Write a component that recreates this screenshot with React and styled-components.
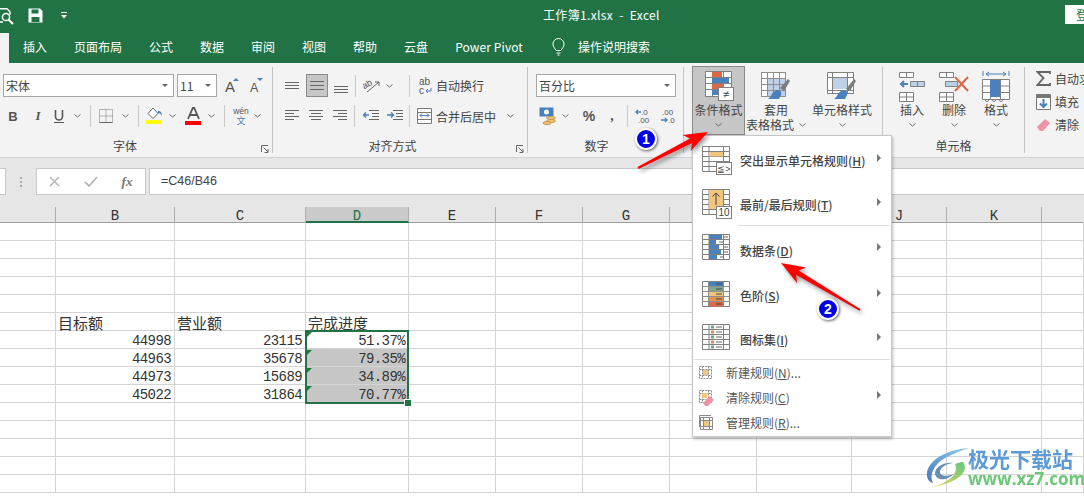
import React from "react";
import styled, { createGlobalStyle } from "styled-components";

const GREEN = "#217346";
const CJK = '"Noto Sans CJK SC", "Noto Sans", sans-serif';
const MONO = '"Liberation Mono", "Noto Sans CJK SC", monospace';
const BLUE = "#4a80bd";
const ORANGE = "#dc6844";
const GOLD = "#f1c67c";

const Global = createGlobalStyle`
  html, body { margin: 0; padding: 0; background: #fff; overflow: hidden; }
  * { box-sizing: border-box; }
`;

const Page = styled.div`
  position: relative; width: 1084px; height: 497px; overflow: hidden;
  font-family: ${CJK}; font-size: 12px; color: #444; background: #fff;
  display: flex; flex-direction: column;
`;

/* ---- title bar ---- */
const TitleBar = styled.header`
  height: 33px; background: ${GREEN}; color: #fff; display: flex; align-items: flex-start;
`;
const Quick = styled.div`
  width: 543px; height: 33px; display: flex; align-items: flex-start; padding-top: 8px;
`;
const Title = styled.div`
  font-size: 12px; line-height: 16px; margin-top: 7px; letter-spacing: 0.35px; white-space: pre;
`;
const Login = styled.div`
  margin-left: auto; margin-top: 5px; width: 19px; height: 19px; background: #fff; color: ${GREEN};
  font-size: 12px; line-height: 19px; padding-left: 11px; overflow: hidden; white-space: nowrap;
`;

/* ---- tabs ---- */
const TabBar = styled.nav`
  height: 30px; background: ${GREEN}; display: flex; align-items: center; gap: 27px; padding-right: 10px;
`;
const ActiveTab = styled.div`
  width: 9px; height: 30px; background: #f3f3f3; margin-right: -13px;
`;
const Tab = styled.div`
  color: #fff; font-size: 12px; line-height: 16px; white-space: nowrap; padding-bottom: 2px;
  letter-spacing: ${p => (p.$latin ? "0.1px" : "0")};
`;
const Bulb = styled.svg`
  margin: -2px -14px 0 2px; flex: none;
`;

/* ---- ribbon ---- */
const Ribbon = styled.section`
  height: 95px; background: #f3f3f3; border-bottom: 1px solid #d2d2d2; display: flex; padding: 4px 0 4px;
`;
const Group = styled.div`
  position: relative; width: ${p => p.$w}px; flex: none; display: flex; flex-direction: column;
  border-right: ${p => (p.$last ? "none" : "1px solid #c4c4c4")};
`;
const GroupRow = styled.div`
  display: flex; align-items: center; height: ${p => p.$h}px; margin-top: ${p => p.$mt || 0}px;
`;
const GroupLabel = styled.div`
  margin-top: auto; height: 14px; line-height: 14px; text-align: center; font-size: 12px; color: #444;
  padding-right: ${p => p.$pr || 0}px;
`;
const Launcher = styled.svg`
  position: absolute; right: 3px; bottom: 0;
`;
const Select = styled.div`
  width: ${p => p.$w}px; height: 23px; margin-left: ${p => p.$ml || 0}px; background: #fff;
  border: 1px solid #a6a6a6; display: flex; align-items: center; justify-content: space-between;
  padding: 0 5px 0 2px; font-size: 12px; color: #444; flex: none;
`;
const Caret = styled.i`
  width: 0; height: 0; border-left: 3.5px solid transparent; border-right: 3.5px solid transparent;
  border-top: 3.5px solid #666;
`;
const ToggleOn = styled.div`
  width: 22px; height: 23px; margin-left: 6px; flex: none; background: #c6c6c6; border: 1px solid #8a8a8a;
  display: flex; align-items: center; justify-content: center;
`;
const Ico = styled.svg`
  flex: none; display: block; margin-left: ${p => p.$ml || 0}px; margin-top: ${p => p.$mt || 0}px;
`;
const Sep = styled.div`
  flex: none; width: 1px; height: 22px; background: #c8c8c8; margin-left: ${p => p.$ml || 0}px;
`;
const Glyph = styled.span`
  flex: none; width: ${p => p.$w}px; margin-left: ${p => p.$ml || 0}px; text-align: center;
  color: ${p => p.$color || "#555"};
  font: ${p => p.$font || `bold 13px "Liberation Sans", sans-serif`};
`;
const ToolText = styled.span`
  flex: none; margin-left: ${p => p.$ml || 0}px; font-size: 12px; color: #444; white-space: nowrap;
`;
const BigRow = styled.div`
  display: flex; align-items: flex-start; padding-left: ${p => p.$pl}px;
`;
const BigBtn = styled.div`
  width: ${p => p.$w}px; height: 69px; margin-top: -1px; flex: none; margin-left: ${p => p.$ml || 0}px;
  display: flex; flex-direction: column; align-items: center; padding-top: 4px;
  border: 1px solid ${p => (p.$active ? "#8a8a8a" : "transparent")};
  background: ${p => (p.$active ? "#c6c6c6" : "transparent")};
`;
const BigIcon = styled.div`
  height: 31px; display: flex; align-items: flex-start; justify-content: center; flex: none;
`;
const BigText = styled.div`
  height: 15px; line-height: 15px; font-size: 12px; color: #444; white-space: nowrap;
  display: flex; align-items: center; justify-content: center; gap: 5px;
`;
const EditRow = styled.div`
  height: 23px; display: flex; align-items: center; padding-left: 11px; white-space: nowrap; font-size: 12px;
`;

/* ---- formula bar ---- */
const FormulaBar = styled.section`
  height: 49px; background: #e6e6e6; display: flex; align-items: flex-start; padding-top: 10px; flex: none;
`;
const NameBox = styled.div`
  width: 6px; height: 27px; background: #fff; border: 1px solid #c8c8c8; border-left: none;
`;
const Dots = styled.div`
  width: 30px; height: 27px; display: flex; flex-direction: column; align-items: center; justify-content: center; gap: 2px;
  span { width: 2px; height: 2px; background: #aaa; }
`;
const FxBox = styled.div`
  width: 110px; height: 27px; background: #fff; border: 1px solid #c8c8c8; display: flex; align-items: center;
`;
const Input = styled.div`
  flex: 1; margin-left: 3px; height: 27px; background: #fff; border: 1px solid #c8c8c8; border-right: none;
  padding-left: 11px; font: 12.5px/25px "Liberation Sans", sans-serif; color: #444;
`;

/* ---- sheet ---- */
const Sheet = styled.main`
  flex: 1; display: grid; background: #fff;
  grid-template-columns: 56px 119px 131px 103px 87px 87px 87px 87px 95px 95px 95px 42px;
  grid-auto-rows: 18px; grid-template-rows: 16px;
`;
const Head = styled.div`
  background: ${p => (p.$on ? "#cacaca" : "#e6e6e6")};
  color: ${p => (p.$on ? GREEN : "#333")};
  border-right: 1px solid ${p => (p.$end ? "transparent" : "#aeaeae")};
  border-bottom: ${p => (p.$on ? `2px solid ${GREEN}` : "1px solid #9e9e9e")};
  font: 14px/19px ${MONO}; text-align: center; overflow: hidden;
`;
const Cell = styled.div`
  position: relative; background: ${p => (p.$fill ? "#c6c6c6" : "#fff")};
  border-right: 1px solid #d4d4d4; border-bottom: 1px solid #d4d4d4;
  padding: 0 3px 0 2px; white-space: nowrap;
  text-align: ${p => (p.$num ? "right" : "left")};
  font: ${p => (p.$num ? `14px/20px ${MONO}` : `15px/19px ${CJK}`)}; color: #333;
  letter-spacing: ${p => (p.$num ? "-0.6px" : "0")};
  ${p => p.$mark && `&::before { content: ""; position: absolute; left: 1px; top: 1px; border-top: 5px solid #1c7a33; border-right: 5px solid transparent; }`}
`;
const Selection = styled.div`
  position: absolute; left: -1px; top: -1px; width: 104px; height: 74px; border: 2px solid ${GREEN}; z-index: 2;
`;
const Handle = styled.div`
  position: absolute; right: -4px; bottom: -4px; width: 6px; height: 6px; background: ${GREEN}; outline: 1px solid #fff;
`;

/* ---- menu ---- */
const Menu = styled.div`
  position: absolute; left: 692px; top: 135px; width: 200px; height: 302px; background: #fff; z-index: 5;
  border: 1px solid #c6c6c6; box-shadow: 1px 2px 3px rgba(0,0,0,.25); padding-top: 2px;
  display: flex; flex-direction: column;
`;
const LargeItem = styled.div`
  height: ${p => p.$h}px; display: flex; align-items: center; padding: 0 10px 0 9px; flex: none;
  font-size: 12px; font-weight: 500; color: #444;
`;
const SmallItem = styled.div`
  height: 25px; display: flex; align-items: center; padding: 0 10px 0 6px; flex: none; font-size: 12px; color: #555;
`;
const ItemLabel = styled.span`
  margin-left: ${p => p.$ml}px; white-space: nowrap; padding-top: ${p => p.$pt || 0}px;
`;
const Key = styled.span` text-decoration: underline; `;
const MenuDivider = styled.div`
  height: 1px; background: #dedede; margin-left: ${p => p.$ml}px; margin-right: 1px; flex: none;
`;
const SubArrow = styled.i`
  margin-left: auto; width: 0; height: 0; border-left: 4px solid #777; border-top: 4px solid transparent;
  border-bottom: 4px solid transparent; margin-top: -5px;
`;

/* ---- annotations ---- */
const Overlay = styled.svg`
  position: absolute; left: 0; top: 0; z-index: 6; pointer-events: none;
  filter: drop-shadow(2px 3px 2px rgba(0,0,0,.4));
`;
const Badge = styled.div`
  position: absolute; left: ${p => p.$x - 11}px; top: ${p => p.$y - 11}px; width: 22px; height: 22px; z-index: 7;
  border-radius: 50%; background: #0000e6; border: 2px solid #fff; box-shadow: 1px 1px 3px rgba(0,0,0,.6);
  color: #fff; font: bold 14px/18px "Liberation Sans", sans-serif; text-align: center;
`;
const Watermark = styled.div`
  position: absolute; left: 925px; top: 446px; display: flex; z-index: 4; filter: blur(0.35px);
`;
const MarkText = styled.div`
  margin-left: -4px; display: flex; flex-direction: column;
`;
const MarkCn = styled.div`
  font: bold 21px/24px ${CJK}; color: #5d9bd6; white-space: nowrap;
`;
const MarkEn = styled.div`
  font: bold 17px/18px "Open Sans", sans-serif; color: #6cc878; white-space: nowrap;
`;

/* ---- drawing helpers ---- */
const Chev = ({ ml = 0, mt = 0 }) => (
  <Ico $ml={ml} $mt={mt} width="7" height="4" viewBox="0 0 7 4">
    <path d="M.5.5 3.5 3 6.5.5" fill="none" stroke="#6a6a6a" />
  </Ico>
);
const grid = (x, y, w, h, xs, ys) =>
  `M${x} ${y}h${w}v${h}h${-w}z` + xs.map(v => `M${x + v} ${y}v${h}`).join("") + ys.map(v => `M${x} ${y + v}h${w}`).join("");
const Bars = ({ ml, ys }) => (
  <Ico $ml={ml} width="15" height="14" viewBox="0 0 15 14">
    <path d={ys.map(([y, a, b]) => `M${a} ${y}H${b}`).join("")} stroke="#666" fill="none" />
  </Ico>
);
const Launch = () => (
  <Launcher width="8" height="8" viewBox="0 0 8 8">
    <path d="M.5 7V.5H7M2.5 2.5 7 7M7 4v3.5H3.5" fill="none" stroke="#666" />
  </Launcher>
);
const arrow = (x1, y1, x2, y2) => {
  const L = Math.hypot(x2 - x1, y2 - y1), ux = (x2 - x1) / L, uy = (y2 - y1) / L, nx = -uy, ny = ux;
  const p = (d, s) => `${x1 + ux * d + nx * s},${y1 + uy * d + ny * s}`;
  return [p(0, 1), p(L - 19, 2.5), p(L - 24, 9), p(L, 0), p(L - 24, -9), p(L - 19, -2.5), p(0, -1)].join(" ");
};

const cols = ["", "B", "C", "D", "E", "F", "G", "", "", "J", "K", ""];
const rowsData = {
  5: ["目标额", "营业额", "完成进度"],
  6: ["44998", "23115", "51.37%"],
  7: ["44963", "35678", "79.35%"],
  8: ["44973", "15689", "34.89%"],
  9: ["45022", "31864", "70.77%"],
};

const CondIcon = () => (
  <svg width="30" height="32" viewBox="0 0 30 32">
    <path d={grid(1.5, .5, 26, 25, [7, 18], [6, 12, 18])} fill="#fff" stroke="#808080" />
    <path d="M8 1h10v5H8zM8 13h12v5H8z" fill={ORANGE} />
    <path d="M8 7h17v5H8zM8 19h8v5H8z" fill={BLUE} />
    <rect x="14.5" y="16.5" width="15" height="13" fill="#fff" stroke="#808080" />
    <text x="22" y="27" fontSize="11" textAnchor="middle" fill="#444" fontFamily="Liberation Sans">≠</text>
  </svg>
);
const TableStyleIcon = () => (
  <svg width="30" height="32" viewBox="0 0 30 32">
    <path d={grid(.5, 1.5, 24, 24, [6, 12, 18], [6, 12, 18])} fill="#fff" stroke="#808080" />
    <path d="M7 8h17v18H7z" fill="#bdd0e6" />
    <path d={grid(.5, 1.5, 24, 24, [6, 12, 18], [6, 12, 18])} fill="none" stroke="#8d8d8d" />
    <path d="M19 17 27 8l2 2-6 10z" fill="#7d7d7d" />
    <path d="M7 28c3-1 4-8 9-9 4 0 5 3 4 5l-2 4z" fill={BLUE} />
  </svg>
);
const CellStyleIcon = () => (
  <svg width="30" height="32" viewBox="0 0 30 32">
    <path d={grid(.5, 1.5, 26, 21, [5, 20], [5, 18])} fill="#fff" stroke="#808080" />
    <path d="M6 7h14v11H6z" fill="#bdd0e6" />
    <path d="M19 18 27 8l2 2-6 10z" fill="#7d7d7d" />
    <path d="M7 28c3-1 4-8 9-9 4 0 5 3 4 5l-2 4z" fill={BLUE} />
  </svg>
);
const InsertIcon = () => (
  <svg width="27" height="32" viewBox="0 0 27 32">
    <path d={grid(.5, 1.5, 14, 5, [7], [])} fill="#fff" stroke="#808080" />
    <path d={grid(.5, 21.5, 14, 9, [7], [4.5])} fill="#fff" stroke="#808080" />
    <path d="M11.5 10.5h14v5h-14z" fill="#bcd0e6" stroke="#808080" />
    <path d="M18.5 10.5v5" stroke="#808080" />
    <path d="M9 13H2M5 10l-3 3 3 3" fill="none" stroke={BLUE} strokeWidth="2" />
  </svg>
);
const DeleteIcon = () => (
  <svg width="31" height="32" viewBox="0 0 31 32">
    <path d={grid(.5, 1.5, 14, 5, [7], [])} fill="#fff" stroke="#808080" />
    <path d={grid(.5, 21.5, 14, 9, [7], [4.5])} fill="#fff" stroke="#808080" />
    <path d="M6.5 10.5h12v5h-12z" fill="#bcd0e6" stroke="#808080" />
    <path d="M16 6 29 20M29 6 16 20" stroke={ORANGE} strokeWidth="2" />
  </svg>
);
const FormatIcon = () => (
  <svg width="29" height="32" viewBox="0 0 29 32">
    <path d="M4 3h20M1 0v5M27 0v5" stroke={BLUE} fill="none" />
    <path d="M4 3l3-2M4 3l3 2M24 3l-3-2M24 3l-3 2" stroke={BLUE} fill="none" />
    <path d={grid(.5, 8.5, 27, 20, [8, 18], [6.5, 13])} fill="#fff" stroke="#808080" />
    <path d="M8 9h10v17H8z" fill={BLUE} />
    <path d="M3 29c1 2 3 2 4 0M10 29c1 2 3 2 4 0M17 29c1 2 3 2 4 0" fill="none" stroke="#808080" />
  </svg>
);
const TableBase = ({ xs = [6.5, 21], ys = [5, 10, 15, 20], children }) => (
  <Ico width="30" height="30" viewBox="0 0 30 30">
    <path d={grid(.5, .5, 27, 25, xs, ys)} fill="#fff" stroke="#808080" />
    {children}
  </Ico>
);

export default function App() {
  return (
    <Page>
      <Global />
      <TitleBar>
        <Quick>
          <Ico width="15" height="17" viewBox="0 0 15 17">
            <path d="M-2 .8h9l3 3v3M3 14H-2" fill="none" stroke="#fff" strokeWidth="1.4" />
            <circle cx="6" cy="9" r="3.6" fill="none" stroke="#fff" strokeWidth="1.5" />
            <path d="M8.6 11.8 13 16" stroke="#fff" strokeWidth="2" />
          </Ico>
          <Ico $ml={13} width="15" height="15" viewBox="0 0 15 15">
            <path d="M.5.5h11.5l2.5 2.5v11.5H.5z" fill="#fff" />
            <path d="M3.5 1.5h7v4h-7zM3.5 9h8v5h-8z" fill={GREEN} />
          </Ico>
          <Ico $ml={18} $mt={4} width="6" height="7" viewBox="0 0 6 7">
            <path d="M0 .5h6" stroke="#fff" />
            <path d="M0 3h6L3 6.5z" fill="#fff" />
          </Ico>
        </Quick>
        <Title>工作簿1.xlsx  -  Excel</Title>
        <Login>登录</Login>
      </TitleBar>

      <TabBar>
        <ActiveTab />
        <Tab>插入</Tab>
        <Tab>页面布局</Tab>
        <Tab>公式</Tab>
        <Tab>数据</Tab>
        <Tab>审阅</Tab>
        <Tab>视图</Tab>
        <Tab>帮助</Tab>
        <Tab>云盘</Tab>
        <Tab $latin>Power Pivot</Tab>
        <Bulb width="13" height="18" viewBox="0 0 13 18">
          <path d="M4 12.5C3.5 10.5 1 9.5 1 6a5.5 5.5 0 0 1 11 0c0 3.5-2.5 4.5-3 6.5zM4.5 15h4M5.5 17h2" fill="none" stroke="#fff" />
        </Bulb>
        <Tab>操作说明搜索</Tab>
      </TabBar>

      <Ribbon>
        <Group $w={273}>
          <GroupRow $h={23} $mt={7}>
            <Select $w={171} $ml={3}>宋体<Caret /></Select>
            <Select $w={40} $ml={3}>11<Caret /></Select>
            <Ico $ml={8} width="16" height="20" viewBox="0 0 16 20">
              <text x="0" y="16" fontSize="15" fill="#555" fontFamily="Liberation Sans">A</text>
              <path d="M8 5l3-3 3 3z" fill={BLUE} />
            </Ico>
            <Ico $ml={9} width="14" height="20" viewBox="0 0 14 20">
              <text x="0" y="16" fontSize="12.5" fill="#555" fontFamily="Liberation Sans">A</text>
              <path d="M7 2h6l-3 3z" fill={BLUE} />
            </Ico>
          </GroupRow>
          <GroupRow $h={22} $mt={8}>
            <Glyph $w={16} $ml={5}>B</Glyph>
            <Glyph $w={14} $ml={10} $font={`italic bold 13px "Liberation Serif", serif`}>I</Glyph>
            <Ico $ml={9} width="10" height="13" viewBox="0 0 10 13">
              <path d="M1.5 0v6.5a3.5 3.5 0 0 0 7 0V0" fill="none" stroke="#555" strokeWidth="1.6" />
              <path d="M0 12.5h10" stroke="#555" />
            </Ico>
            <Chev ml={10} />
            <Sep $ml={9} />
            <Ico $ml={8} width="14" height="14" viewBox="0 0 14 14">
              <path d="M.5.5h13v13H.5zM7 .5v13M.5 7h13" fill="none" stroke="#777" strokeDasharray="1 1" />
              <path d="M.5 13.5h13" stroke="#666" />
            </Ico>
            <Chev ml={9} />
            <Sep $ml={9} />
            <Ico $ml={7} width="17" height="18" viewBox="0 0 17 18">
              <path d="M7 1 2 6.5l5 5 5-5z" fill="#fff" stroke="#666" />
              <path d="M12 4c3 0 4 2 4 5-1-2-2-3-4-3z" fill={BLUE} />
              <rect x="0" y="13" width="16" height="4" fill="#ffff00" />
            </Ico>
            <Chev ml={6} />
            <Ico $ml={9} width="17" height="18" viewBox="0 0 17 18">
              <path d="M3 12 8 .5h1L14 12M5.3 8h6.4" fill="none" stroke="#555" strokeWidth="1.8" />
              <rect x="0" y="14" width="16" height="4" fill="#ff0000" />
            </Ico>
            <Chev ml={6} />
            <Sep $ml={9} />
            <Ico $ml={8} width="16" height="18" viewBox="0 0 16 18">
              <text x="8" y="7" fontSize="8.5" textAnchor="middle" fill="#555" fontFamily="Liberation Sans">wén</text>
              <text x="8" y="17" fontSize="9" textAnchor="middle" fill={BLUE} fontFamily="Noto Sans CJK SC">文</text>
            </Ico>
            <Chev ml={5} />
          </GroupRow>
          <GroupLabel $pr={22}>字体</GroupLabel>
          <Launch />
        </Group>

        <Group $w={255}>
          <GroupRow $h={23} $mt={7}>
            <Bars ml={12} ys={[[3.5, 0, 14], [6.5, 0, 14], [9.5, 0, 14]]} />
            <ToggleOn>
              <Ico width="14" height="11" viewBox="0 0 14 11"><path d="M0 1.5h14M0 5.5h14M0 9.5h14" stroke="#666" /></Ico>
            </ToggleOn>
            <Ico $ml={6} $mt={8} width="15" height="14" viewBox="0 0 15 14"><path d="M0 3.5h14M0 6.5h14M0 9.5h14" stroke="#666" /></Ico>
            <Sep $ml={6} />
            <Ico $ml={7} width="18" height="18" viewBox="0 0 18 18">
              <text x="0" y="10" fontSize="9" fill="#555" fontFamily="Liberation Sans" transform="rotate(-30 5 9)">ab</text>
              <path d="M4 15 16 5M16 5h-4M16 5v4" fill="none" stroke="#666" />
            </Ico>
            <Chev ml={5} />
            <Sep $ml={16} />
            <Ico $ml={9} width="14" height="18" viewBox="0 0 14 18">
              <text x="0" y="8" fontSize="10" fill="#555" fontFamily="Liberation Sans">ab</text>
              <text x="0" y="17" fontSize="10" fill="#555" fontFamily="Liberation Sans">c</text>
              <path d="M12 11v3H7M9 12l-2 2 2 2" fill="none" stroke={BLUE} />
            </Ico>
            <ToolText $ml={3}>自动换行</ToolText>
          </GroupRow>
          <GroupRow $h={22} $mt={8}>
            <Bars ml={12} ys={[[1.5, 0, 14], [4.5, 0, 9], [7.5, 0, 14], [10.5, 0, 9]]} />
            <Bars ml={9} ys={[[1.5, 0, 14], [4.5, 2, 12], [7.5, 0, 14], [10.5, 2, 12]]} />
            <Bars ml={9} ys={[[1.5, 0, 14], [4.5, 5, 14], [7.5, 0, 14], [10.5, 5, 14]]} />
            <Sep $ml={6} />
            <Ico $ml={8} width="16" height="12" viewBox="0 0 16 12">
              <path d="M6 .5h10M9 3.5h7M9 6.5h7M6 9.5h10" stroke="#666" fill="none" />
              <path d="M6 5H1M3 2.5.5 5 3 7.5" stroke={BLUE} fill="none" strokeWidth="1.5" />
            </Ico>
            <Ico $ml={8} width="16" height="12" viewBox="0 0 16 12">
              <path d="M6 .5h10M9 3.5h7M9 6.5h7M6 9.5h10" stroke="#666" fill="none" />
              <path d="M0 5h6M4 2.5 6.5 5 4 7.500" stroke={BLUE} fill="none" strokeWidth="1.5" />
            </Ico>
            <Sep $ml={6} />
            <Ico $ml={7} width="15" height="16" viewBox="0 0 15 16">
              <path d={grid(.5, .5, 14, 15, [], [4, 11])} fill="#fff" stroke="#777" />
              <path d="M3 7.5h9M3 7.5l2-2M3 7.5l2 2M12 7.5l-2-2M12 7.5l-2 2" fill="none" stroke={BLUE} />
            </Ico>
            <ToolText $ml={4}>合并后居中</ToolText>
            <Chev ml={11} />
          </GroupRow>
          <GroupLabel $pr={15}>对齐方式</GroupLabel>
          <Launch />
        </Group>

        <Group $w={156}>
          <GroupRow $h={23} $mt={7}>
            <Select $w={140} $ml={8}>百分比<Caret /></Select>
          </GroupRow>
          <GroupRow $h={22} $mt={8}>
            <Ico $ml={11} width="18" height="18" viewBox="0 0 18 18">
              <rect x=".5" y=".5" width="14" height="9" fill={BLUE} />
              <circle cx="7.5" cy="5" r="2.5" fill="#fff" />
              <ellipse cx="12" cy="11" rx="4.5" ry="1.5" fill={GOLD} stroke="#c79a4a" />
              <ellipse cx="12" cy="14" rx="4.5" ry="1.5" fill={GOLD} stroke="#c79a4a" />
              <ellipse cx="8" cy="16" rx="4" ry="1.5" fill={GOLD} stroke="#c79a4a" />
            </Ico>
            <Chev ml={5} />
            <Glyph $w={14} $ml={13} $font={`bold 14px "Liberation Sans", sans-serif`}>%</Glyph>
            <Glyph $w={6} $ml={13} $font={`bold 14px "Liberation Serif", serif`}>,</Glyph>
            <Sep $ml={12} />
            <Ico $ml={7} width="16" height="16" viewBox="0 0 16 16">
              <text x="6" y="7" fontSize="8" fill="#555" fontFamily="Liberation Sans">.0</text>
              <text x="3" y="15" fontSize="8" fill="#555" fontFamily="Liberation Sans">.00</text>
              <path d="M6 4H1M3 2 1 4l2 2" fill="none" stroke={BLUE} strokeWidth="1.3" />
            </Ico>
            <Ico $ml={8} width="17" height="16" viewBox="0 0 17 16">
              <text x="3" y="7" fontSize="8" fill="#555" fontFamily="Liberation Sans">.00</text>
              <text x="9" y="15" fontSize="8" fill="#555" fontFamily="Liberation Sans">.0</text>
              <path d="M2 12h6M6 10l2 2-2 2" fill="none" stroke={BLUE} strokeWidth="1.3" />
            </Ico>
          </GroupRow>
          <GroupLabel $pr={18}>数字</GroupLabel>
        </Group>

        <Group $w={199}>
          <BigRow $pl={8}>
            <BigBtn $w={53} $active>
              <BigIcon><CondIcon /></BigIcon>
              <BigText>条件格式</BigText>
              <BigText><Chev /></BigText>
            </BigBtn>
            <BigBtn $w={60} $ml={1}>
              <BigIcon><TableStyleIcon /></BigIcon>
              <BigText>套用</BigText>
              <BigText>表格格式<Chev /></BigText>
            </BigBtn>
            <BigBtn $w={62} $ml={5}>
              <BigIcon><CellStyleIcon /></BigIcon>
              <BigText>单元格样式</BigText>
              <BigText><Chev /></BigText>
            </BigBtn>
          </BigRow>
        </Group>

        <Group $w={142}>
          <BigRow $pl={8}>
            <BigBtn $w={42}>
              <BigIcon><InsertIcon /></BigIcon>
              <BigText>插入</BigText>
              <BigText><Chev /></BigText>
            </BigBtn>
            <BigBtn $w={42}>
              <BigIcon><DeleteIcon /></BigIcon>
              <BigText>删除</BigText>
              <BigText><Chev /></BigText>
            </BigBtn>
            <BigBtn $w={42}>
              <BigIcon><FormatIcon /></BigIcon>
              <BigText>格式</BigText>
              <BigText><Chev /></BigText>
            </BigBtn>
          </BigRow>
          <GroupLabel>单元格</GroupLabel>
        </Group>

        <Group $w={59} $last>
          <EditRow>
            <Ico width="15" height="15" viewBox="0 0 15 15"><path d="M14 3V1H1.5l6 6-6 7H14v-2" fill="none" stroke="#666" strokeWidth="1.8" /></Ico>
            <ToolText $ml={4}>自动求和</ToolText>
          </EditRow>
          <EditRow>
            <Ico width="15" height="16" viewBox="0 0 15 16">
              <path d="M.5.5h14v15H.5z" fill="#fff" stroke="#777" />
              <path d="M1 1h13v3H1z" fill="#777" />
              <path d="M7.5 5v8M4 9.5l3.5 3.5L11 9.5" fill="none" stroke={BLUE} strokeWidth="2" />
            </Ico>
            <ToolText $ml={4}>填充</ToolText>
          </EditRow>
          <EditRow>
            <Ico width="15" height="14" viewBox="0 0 15 14">
              <path d="M9 1l5 4-7 8H4L1 9z" fill="#ec93a6" />
            </Ico>
            <ToolText $ml={4}>清除</ToolText>
          </EditRow>
        </Group>
      </Ribbon>

      <FormulaBar>
        <NameBox />
        <Dots><span /><span /><span /></Dots>
        <FxBox>
          <Ico $ml={12} width="11" height="11" viewBox="0 0 11 11"><path d="M1 1l9 9M10 1l-9 9" stroke="#b8b8b8" strokeWidth="1.6" /></Ico>
          <Ico $ml={24} width="14" height="11" viewBox="0 0 14 11"><path d="M1 6l4 4 8-9" fill="none" stroke="#b8b8b8" strokeWidth="1.8" /></Ico>
          <Glyph $w={14} $ml={22} $color="#777" $font={`italic bold 13px "Liberation Serif", serif`}>fx</Glyph>
        </FxBox>
        <Input>=C46/B46</Input>
      </FormulaBar>

      <Sheet>
        {cols.map((c, i) => (
          <Head key={i} $on={c === "D"} $end={i === 11}>{c}</Head>
        ))}
        {Array.from({ length: 15 }, (_, r) =>
          cols.map((_, c) => {
            const row = rowsData[r];
            const text = row && c >= 1 && c <= 3 ? row[c - 1] : "";
            const data = r >= 6 && r <= 9;
            const sel = data && c === 3;
            return (
              <Cell key={`${r}-${c}`} $num={data} $fill={sel && r > 6} $mark={sel}>
                {text}
                {sel && r === 6 && <Selection><Handle /></Selection>}
              </Cell>
            );
          })
        )}
      </Sheet>

      <Menu>
        <LargeItem $h={45}>
          <TableBase>
            <path d="M7 6h14v4.5H7z" fill={GOLD} />
            <rect x="14.5" y="16.5" width="15" height="12" fill="#fff" stroke="#808080" />
            <text x="22" y="26" fontSize="9" textAnchor="middle" fill="#444" fontFamily="Liberation Sans">≦&gt;</text>
          </TableBase>
          <ItemLabel $ml={8}>突出显示单元格规则(<Key>H</Key>)</ItemLabel>
          <SubArrow />
        </LargeItem>
        <LargeItem $h={42}>
          <TableBase>
            <path d="M7 1h14v19H7z" fill={GOLD} />
            <path d="M14 16V4M10.5 7.5 14 4l3.5 3.5" fill="none" stroke="#444" />
            <rect x="14.5" y="17.5" width="15" height="12" fill="#fff" stroke="#808080" />
            <text x="22" y="27" fontSize="10" textAnchor="middle" fill="#444" fontFamily="Liberation Sans">10</text>
          </TableBase>
          <ItemLabel $ml={8}>最前/最后规则(<Key>T</Key>)</ItemLabel>
          <SubArrow />
        </LargeItem>
        <MenuDivider $ml={45} />
        <LargeItem $h={46}>
          <TableBase>
            <path d="M7 1h13v4H7zM7 6h7v4H7zM7 11h10v4H7zM7 16h12v4H7zM7 21h8v4H7z" fill={BLUE} />
            <path d="M22 3h4M17 8h4M22 13h4M22 18h4M18 23h4" stroke="#666" />
          </TableBase>
          <ItemLabel $ml={8} $pt={3}>数据条(<Key>D</Key>)</ItemLabel>
          <SubArrow />
        </LargeItem>
        <LargeItem $h={47}>
          <TableBase xs={[]} ys={[]}>
            <path d="M7 1h14v4.5H7z" fill={BLUE} />
            <path d="M7 6h14v4.5H7z" fill="#7daa8e" />
            <path d="M7 11h14v4.5H7z" fill={GOLD} />
            <path d="M7 16h14v4.5H7z" fill="#e58f4e" />
            <path d="M7 21h14v4.5H7z" fill={ORANGE} />
            <path d="M.5 5.5h27M.5 10.5h27M.5 15.5h27M.5 20.5h27M6.5.5v25M21.5.5v25" stroke="#8d8d8d" fill="none" />
            <path d="M14 3h6M14 8h6M14 13h6M14 18h6M14 23h6" stroke="#444" />
          </TableBase>
          <ItemLabel $ml={8}>色阶(<Key>S</Key>)</ItemLabel>
          <SubArrow />
        </LargeItem>
        <LargeItem $h={40}>
          <TableBase>
            <path d="M9 1.5h3v3H9zM9 11.5h3v3H9zM9 21.5h3v3H9z" fill="#6aa88d" />
            <path d="M9 6.5h3v3H9zM9 16.5h3v3H9z" fill="#e58f4e" />
            <path d="M14 3h6M14 8h6M14 13h6M14 18h6M14 23h6" stroke="#666" />
          </TableBase>
          <ItemLabel $ml={8}>图标集(<Key>I</Key>)</ItemLabel>
          <SubArrow />
        </LargeItem>
        <MenuDivider $ml={1} />
        <SmallItem>
          <Ico width="14" height="14" viewBox="0 0 14 14">
            <path d={grid(.5, .5, 12, 12, [3, 9], [3, 9])} fill="#fff" stroke="#8a8a8a" strokeDasharray="2 1" />
            <path d="M4 4h5v5H4z" fill={GOLD} />
          </Ico>
          <ItemLabel $ml={13}>新建规则(<Key>N</Key>)...</ItemLabel>
        </SmallItem>
        <SmallItem>
          <Ico width="16" height="16" viewBox="0 0 16 16">
            <path d={grid(.5, .5, 12, 12, [3, 9], [3, 9])} fill="#fff" stroke="#8a8a8a" strokeDasharray="2 1" />
            <path d="M3 3h5v5H3z" fill={GOLD} />
            <path d="M11 6l4 4-6 6H6l-2-3z" fill="#ec93a6" />
          </Ico>
          <ItemLabel $ml={11}>清除规则(<Key>C</Key>)</ItemLabel>
          <SubArrow />
        </SmallItem>
        <SmallItem>
          <Ico width="14" height="15" viewBox="0 0 14 15">
            <path d="M.5 12V.5H12" fill="none" stroke="#8a8a8a" />
            <path d={grid(1.5, 2.5, 12, 12, [3, 9], [3, 9])} fill="#fff" stroke="#8a8a8a" />
            <path d="M5 6h5v5H5z" fill={GOLD} />
          </Ico>
          <ItemLabel $ml={13}>管理规则(<Key>R</Key>)...</ItemLabel>
        </SmallItem>
      </Menu>

      <Overlay width="1084" height="497" viewBox="0 0 1084 497">
        <polygon points={arrow(638, 168, 708, 132)} fill="#f00" />
        <polygon points={arrow(860, 310, 781, 263)} fill="#f00" />
      </Overlay>
      <Badge $x={646} $y={139}>1</Badge>
      <Badge $x={828} $y={309}>2</Badge>

      <Watermark>
        <svg width="47" height="42" viewBox="0 0 47 42">
          <defs>
            <linearGradient id="wmBlue" x1="1" y1="0" x2="0" y2="1">
              <stop offset="0" stopColor="#8fd0f2" />
              <stop offset="1" stopColor="#4a78b8" />
            </linearGradient>
            <linearGradient id="wmGreen" x1="1" y1="0" x2="0" y2="1">
              <stop offset="0" stopColor="#62c77a" />
              <stop offset="1" stopColor="#e6d85e" />
            </linearGradient>
          </defs>
          <path d="M44 2C28 3 6 10 2 26c-1 6 2 10 6 11-4-7 0-19 14-26 8-4 16-7 22-9z" fill="url(#wmBlue)" />
          <path d="M10 28c0-8 10-12 18-11-8 1-13 5-13 9s7 5 13 2c-4 6-16 8-18 0z" fill="#6a8fb5" />
          <path d="M38 16c6 8-2 20-30 25 16-5 26-13 22-23 3-1 5-2 8-2z" fill="url(#wmGreen)" />
        </svg>
        <MarkText>
          <MarkCn>极光下载站</MarkCn>
          <MarkEn>www.xz7.com</MarkEn>
        </MarkText>
      </Watermark>
    </Page>
  );
}
